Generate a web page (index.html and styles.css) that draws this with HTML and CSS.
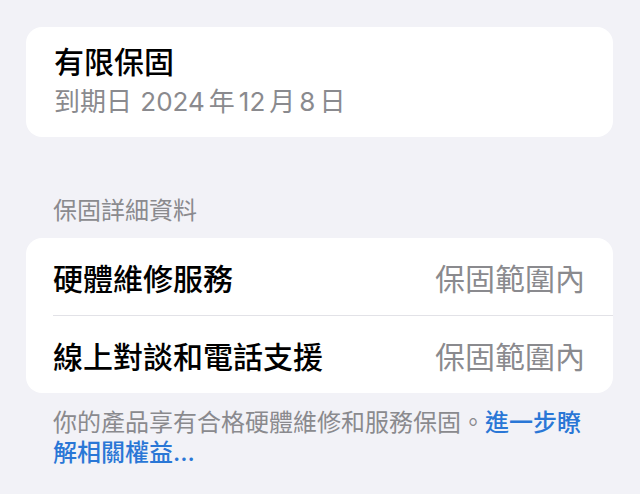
FILE: index.html
```html
<!DOCTYPE html>
<html lang="zh-Hant">
<head>
  <meta charset="UTF-8">
  <meta name="viewport" content="width=device-width, initial-scale=1.0">
  <title>保固</title>
  <link rel="stylesheet" href="styles.css">
</head>
<body>
  <div class="page">
    <div class="card summary">
      <div class="summary-title">有限保固</div>
      <div class="summary-sub">到期日 <span class="num year">2024</span>年<span class="num">12</span>月<span class="num">8</span>日</div>
    </div>

    <div class="section-header">保固詳細資料</div>
    <div class="card list">
      <div class="row">
        <div class="row-inner">
          <span class="row-label">硬體維修服務</span>
          <span class="row-value">保固範圍內</span>
        </div>
      </div>
      <div class="row">
        <div class="row-inner">
          <span class="row-label">線上對談和電話支援</span>
          <span class="row-value">保固範圍內</span>
        </div>
      </div>
    </div>
    <p class="footer">你的產品享有合格硬體維修和服務保固。<a href="#" class="link">進一步瞭解相關權益...</a></p>
  </div>
</body>
</html>
```

FILE: styles.css
```css
body {
  margin: 0;
  background-color: #f2f2f7;
  font-family: Inter, "Noto Sans CJK TC", sans-serif;
  color: #000;
}

.page {
  padding: 27px 27px 0 26px;
}

.card {
  background: #fff;
  border-radius: 16px;
}

.summary {
  padding: 17px 28px 17px;
}

.summary-title {
  font-size: 30px;
  font-weight: 500;
  line-height: 36px;
}

.summary-sub {
  margin-top: 4px;
  font-size: 26px;
  line-height: 36px;
  color: #8a8a8e;
}

.summary-sub .num {
  margin: 0 4px;
}

.summary-sub .year {
  margin-left: 1px;
}

.section-header {
  margin: 59px 0 12px 27px;
  font-size: 24px;
  line-height: 30px;
  color: #8a8a8e;
}

.row {
  padding-left: 27px;
}

.row-inner {
  display: flex;
  justify-content: space-between;
  align-items: center;
  height: 77px;
  padding-right: 28px;
  border-bottom: 1px solid #e2e2e7;
}

.row:last-child .row-inner {
  border-bottom: none;
}

.row-label {
  font-size: 30px;
  font-weight: 500;
}

.row-value {
  font-size: 30px;
  color: #8a8a8e;
}

.footer {
  margin: 15px 22px 0 27px;
  font-size: 24px;
  line-height: 30px;
  color: #8a8a8e;
}

.link {
  color: #2a77d6;
  font-weight: 500;
  text-decoration: none;
}
```
